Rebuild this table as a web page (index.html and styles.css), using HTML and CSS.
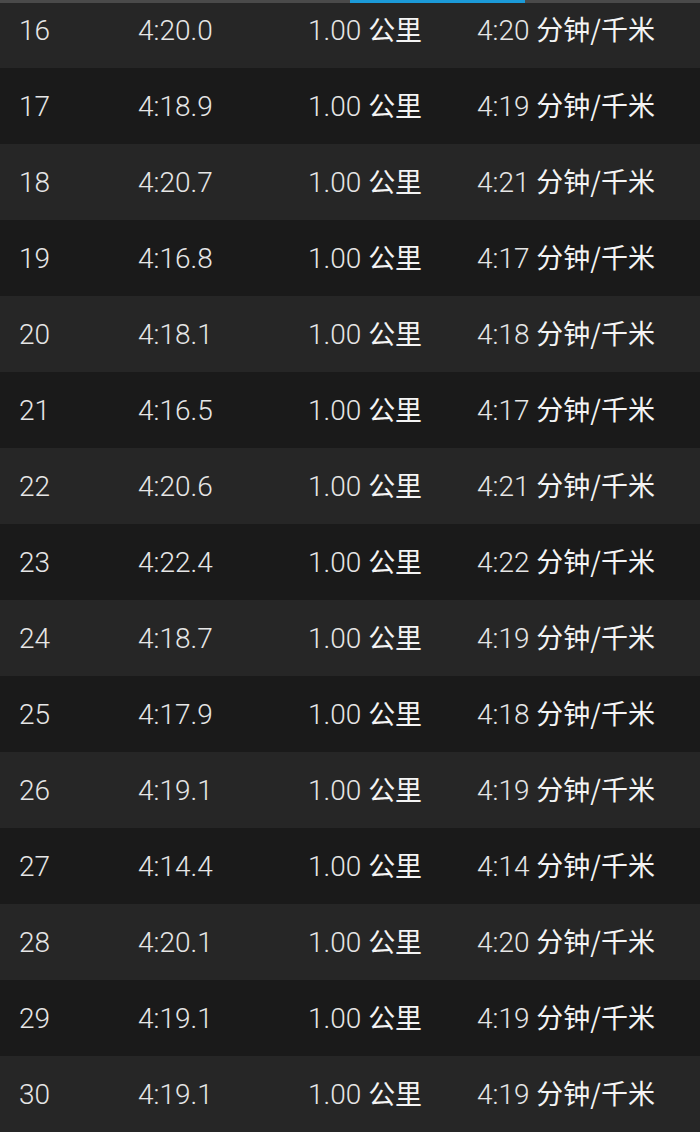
FILE: index.html
```html
<!DOCTYPE html>
<html lang="zh-CN">
<head>
<meta charset="utf-8">
<link rel="stylesheet" href="styles.css">
</head>
<body>
<div class="screen">
  <div class="topbar"><div class="indicator"></div></div>
  <div class="list">
    <div class="row light"><span class="c1">16</span><span class="c2">4:20.0</span><span class="c3">1.00 <b>公里</b></span><span class="c4">4:20 <b>分钟/千米</b></span></div>
    <div class="row dark"><span class="c1">17</span><span class="c2">4:18.9</span><span class="c3">1.00 <b>公里</b></span><span class="c4">4:19 <b>分钟/千米</b></span></div>
    <div class="row light"><span class="c1">18</span><span class="c2">4:20.7</span><span class="c3">1.00 <b>公里</b></span><span class="c4">4:21 <b>分钟/千米</b></span></div>
    <div class="row dark"><span class="c1">19</span><span class="c2">4:16.8</span><span class="c3">1.00 <b>公里</b></span><span class="c4">4:17 <b>分钟/千米</b></span></div>
    <div class="row light"><span class="c1">20</span><span class="c2">4:18.1</span><span class="c3">1.00 <b>公里</b></span><span class="c4">4:18 <b>分钟/千米</b></span></div>
    <div class="row dark"><span class="c1">21</span><span class="c2">4:16.5</span><span class="c3">1.00 <b>公里</b></span><span class="c4">4:17 <b>分钟/千米</b></span></div>
    <div class="row light"><span class="c1">22</span><span class="c2">4:20.6</span><span class="c3">1.00 <b>公里</b></span><span class="c4">4:21 <b>分钟/千米</b></span></div>
    <div class="row dark"><span class="c1">23</span><span class="c2">4:22.4</span><span class="c3">1.00 <b>公里</b></span><span class="c4">4:22 <b>分钟/千米</b></span></div>
    <div class="row light"><span class="c1">24</span><span class="c2">4:18.7</span><span class="c3">1.00 <b>公里</b></span><span class="c4">4:19 <b>分钟/千米</b></span></div>
    <div class="row dark"><span class="c1">25</span><span class="c2">4:17.9</span><span class="c3">1.00 <b>公里</b></span><span class="c4">4:18 <b>分钟/千米</b></span></div>
    <div class="row light"><span class="c1">26</span><span class="c2">4:19.1</span><span class="c3">1.00 <b>公里</b></span><span class="c4">4:19 <b>分钟/千米</b></span></div>
    <div class="row dark"><span class="c1">27</span><span class="c2">4:14.4</span><span class="c3">1.00 <b>公里</b></span><span class="c4">4:14 <b>分钟/千米</b></span></div>
    <div class="row light"><span class="c1">28</span><span class="c2">4:20.1</span><span class="c3">1.00 <b>公里</b></span><span class="c4">4:20 <b>分钟/千米</b></span></div>
    <div class="row dark"><span class="c1">29</span><span class="c2">4:19.1</span><span class="c3">1.00 <b>公里</b></span><span class="c4">4:19 <b>分钟/千米</b></span></div>
    <div class="row light"><span class="c1">30</span><span class="c2">4:19.1</span><span class="c3">1.00 <b>公里</b></span><span class="c4">4:19 <b>分钟/千米</b></span></div>
  </div>
</div>
</body>
</html>
```

FILE: styles.css
```css
html, body {
  margin: 0;
  padding: 0;
  background: #1b1b1b;
}
.screen {
  width: 700px;
  height: 1132px;
  overflow: hidden;
  position: relative;
  font-family: Roboto, "Noto Sans CJK SC", sans-serif;
}
.topbar {
  position: absolute;
  top: 0;
  left: 0;
  right: 0;
  height: 3px;
  background: #4a4a4a;
  z-index: 2;
}
.indicator {
  margin-left: 350px;
  width: 175px;
  height: 3px;
  background: #1b9ad8;
}
.list {
  margin-top: -8px;
  display: flex;
  flex-direction: column;
}
.row {
  box-sizing: border-box;
  height: 76px;
  padding-top: 2px;
  display: grid;
  grid-template-columns: 119px 170px 169px 1fr;
  align-items: center;
  padding-left: 19px;
  font-size: 28px;
  line-height: 44px;
  font-weight: 300;
  color: #e6e6e6;
}
.row.light { background: #262626; }
.row.dark { background: #1a1a1a; }
.row b {
  font-family: "Noto Sans CJK SC", sans-serif;
  font-weight: 400;
  font-size: 27px;
  line-height: 1;
  color: #f4f4f4;
  vertical-align: 0;
}
```
